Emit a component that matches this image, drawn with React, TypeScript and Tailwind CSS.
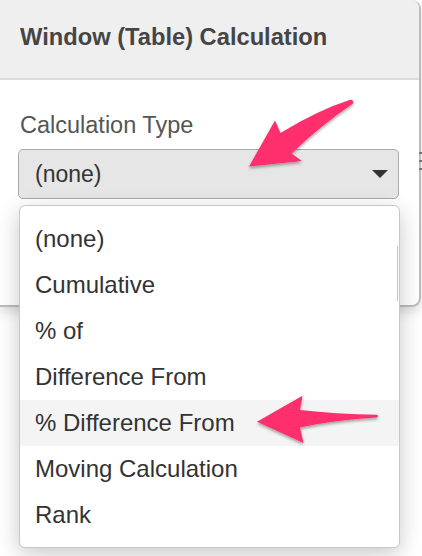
const OPTIONS = [
  '(none)',
  'Cumulative',
  '% of',
  'Difference From',
  '% Difference From',
  'Moving Calculation',
  'Rank',
];

const HIGHLIGHTED = '% Difference From';

function Caret() {
  return (
    <svg width="16" height="8" viewBox="0 0 16 8" className="shrink-0">
      <path d="M0 0 L16 0 L8 8 Z" fill="#333" />
    </svg>
  );
}

function Arrows() {
  return (
    <svg
      className="pointer-events-none absolute inset-0"
      width="422"
      height="556"
      viewBox="0 0 422 556"
    >
      <defs>
        <filter id="arrowShadow" x="-20%" y="-20%" width="140%" height="160%">
          <feDropShadow dx="0" dy="2" stdDeviation="1.6" floodColor="#000" floodOpacity="0.35" />
        </filter>
      </defs>
      <g fill="#ff2d6d" filter="url(#arrowShadow)">
        {/* top arrow, pointing at the select */}
        <path d="M351 99.5 Q354 101 353 103.5 Q320 126 291.5 153.5 L302 161 L249 166.5 L275 120.5 L280.5 133 Q318 110 351 99.5 Z" />
        {/* lower arrow, pointing at the highlighted option */}
        <path d="M377 414.8 Q379 416 377 417.6 Q335 420 300 427.5 L303.5 443 L257 421.8 L302.5 395.8 L300 410 Q335 414 377 414.8 Z" />
      </g>
    </svg>
  );
}

export default function App() {
  return (
    <div className="relative h-[556px] w-[422px] overflow-hidden bg-white font-['Liberation_Sans',Arial,sans-serif]">
      <div className="h-[307px] w-[421px] overflow-hidden rounded-r-[9px] border-r-2 border-b-2 border-[#bcbcbc] bg-white shadow-[0_5px_12px_rgba(0,0,0,0.14)]">
        <div className="flex h-[80px] items-center border-b-2 border-[#dcdcdc] bg-[#efefef] pl-[20px] pb-[2px]">
          <h1 className="text-[23.7px] font-bold leading-none text-[#454545]">
            Window (Table) Calculation
          </h1>
        </div>
        <div className="pt-[31px] pl-[18px] pr-[20px]">
          <div className="pl-[2px] text-[23.5px] leading-[28px] text-[#555]">Calculation Type</div>
          <div className="mt-[10px] flex h-[50px] items-center justify-between rounded-[5px] border-[1.5px] border-[#aaa] bg-[#e6e6e6] pr-[10px] pl-[16px]">
            <span className="text-[23px] text-[#333]">(none)</span>
            <Caret />
          </div>
        </div>
      </div>

      {/* partially visible control outside the panel */}
      <div className="absolute top-[152px] left-[419px] flex flex-col gap-[6px]">
        <div className="h-[2px] w-[3px] bg-[#777]" />
        <div className="h-[2px] w-[3px] bg-[#777]" />
        <div className="h-[2px] w-[3px] bg-[#777]" />
      </div>

      {/* open dropdown list */}
      <div className="absolute top-[205px] left-[19px] h-[343px] w-[381px] rounded-[6px] border border-[#c8c8c8] bg-white py-[10px] shadow-[0_6px_22px_rgba(0,0,0,0.22)]">
        <div className="absolute top-[40px] right-[1px] h-[55px] w-[1.5px] bg-[#c4c4c4]" />
        {OPTIONS.map((opt) => (
          <div
            key={opt}
            className={
              opt === HIGHLIGHTED
                ? 'flex h-[46px] items-center bg-[#f4f4f4] pl-[15px] text-[24px] text-[#333]'
                : 'flex h-[46px] items-center pl-[15px] text-[24px] text-[#333]'
            }
          >
            {opt}
          </div>
        ))}
      </div>

      <Arrows />
    </div>
  );
}
